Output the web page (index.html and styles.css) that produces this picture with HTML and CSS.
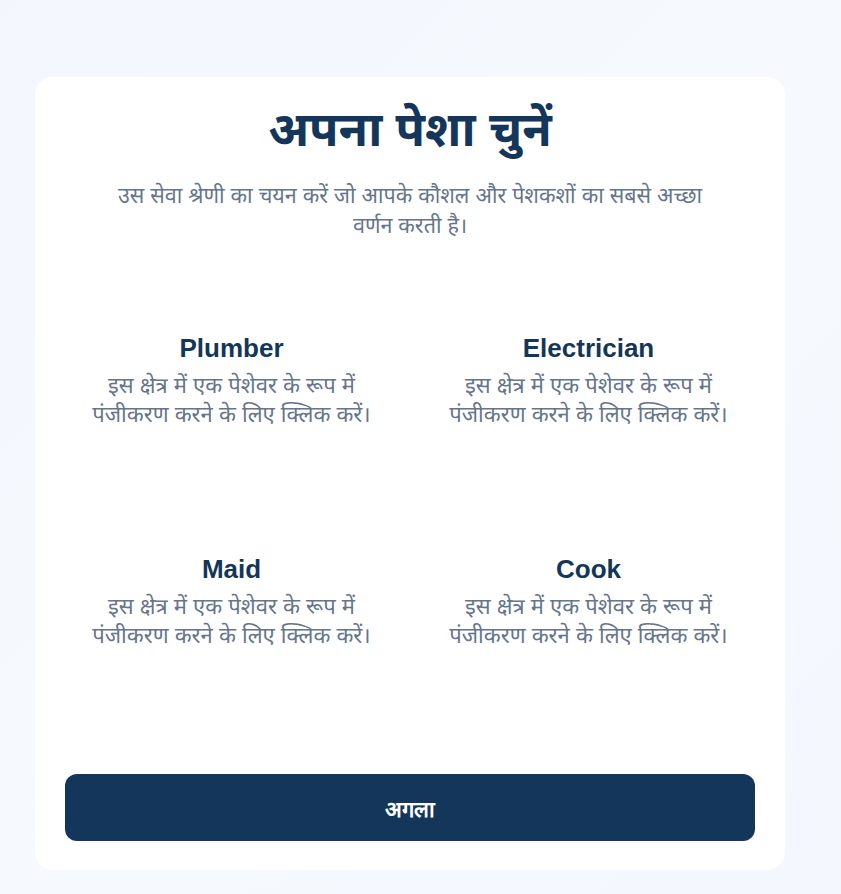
FILE: index.html
```html
<!DOCTYPE html>
<html lang="hi">
<head>
<meta charset="utf-8">
<title>अपना पेशा चुनें</title>
<link rel="stylesheet" href="styles.css">
</head>
<body>
<main class="page">
  <section class="card">
    <h1 class="title">अपना पेशा चुनें</h1>
    <p class="subtitle">उस सेवा श्रेणी का चयन करें जो आपके कौशल और पेशकशों का सबसे अच्छा वर्णन करती है।</p>
    <div class="grid">
      <div class="option">
        <h2 class="option-title">Plumber</h2>
        <p class="option-desc">इस क्षेत्र में एक पेशेवर के रूप में पंजीकरण करने के लिए क्लिक करें।</p>
      </div>
      <div class="option">
        <h2 class="option-title">Electrician</h2>
        <p class="option-desc">इस क्षेत्र में एक पेशेवर के रूप में पंजीकरण करने के लिए क्लिक करें।</p>
      </div>
      <div class="option">
        <h2 class="option-title">Maid</h2>
        <p class="option-desc">इस क्षेत्र में एक पेशेवर के रूप में पंजीकरण करने के लिए क्लिक करें।</p>
      </div>
      <div class="option">
        <h2 class="option-title">Cook</h2>
        <p class="option-desc">इस क्षेत्र में एक पेशेवर के रूप में पंजीकरण करने के लिए क्लिक करें।</p>
      </div>
    </div>
    <button class="next-btn" type="button">अगला</button>
  </section>
</main>
</body>
</html>
```

FILE: styles.css
```css
* { box-sizing: border-box; }
html, body {
  margin: 0;
  padding: 0;
}
body {
  min-height: 894px;
  background: linear-gradient(135deg, #f3f7fd 0%, #f6f9fe 50%, #f4f8fe 100%);
  font-family: "Liberation Sans", Arial, "Noto Sans", sans-serif;
}
.page {
  padding: 77px 56px 24px 35px;
}
.card {
  width: 750px;
  background: #ffffff;
  border-radius: 18px;
  padding: 30px 30px 29px;
  display: flex;
  flex-direction: column;
  align-items: center;
}
.title {
  margin: 0;
  font-size: 48px;
  line-height: 46px;
  font-weight: 700;
  color: #14365a;
  text-align: center;
}
.subtitle {
  margin: 28px 0 0;
  max-width: 600px;
  font-size: 21.5px;
  line-height: 30px;
  color: #65758b;
  text-align: center;
}
.grid {
  width: 100%;
  margin-top: 24px;
  display: grid;
  grid-template-columns: 1fr 1fr;
  gap: 24px;
}
.option {
  height: 197px;
  padding: 67px 16px 0;
  text-align: center;
}
.option-title {
  margin: 0;
  font-size: 26px;
  line-height: 32px;
  font-weight: 700;
  color: #14365a;
}
.option-desc {
  margin: 7px 0 0;
  font-size: 22px;
  line-height: 29px;
  color: #65758b;
}
.next-btn {
  width: 100%;
  height: 67px;
  margin-top: 91px;
  border: none;
  border-radius: 12px;
  background: #14365a;
  color: #ffffff;
  font-family: "Liberation Sans", Arial, sans-serif;
  font-size: 22px;
  font-weight: 700;
}
```
